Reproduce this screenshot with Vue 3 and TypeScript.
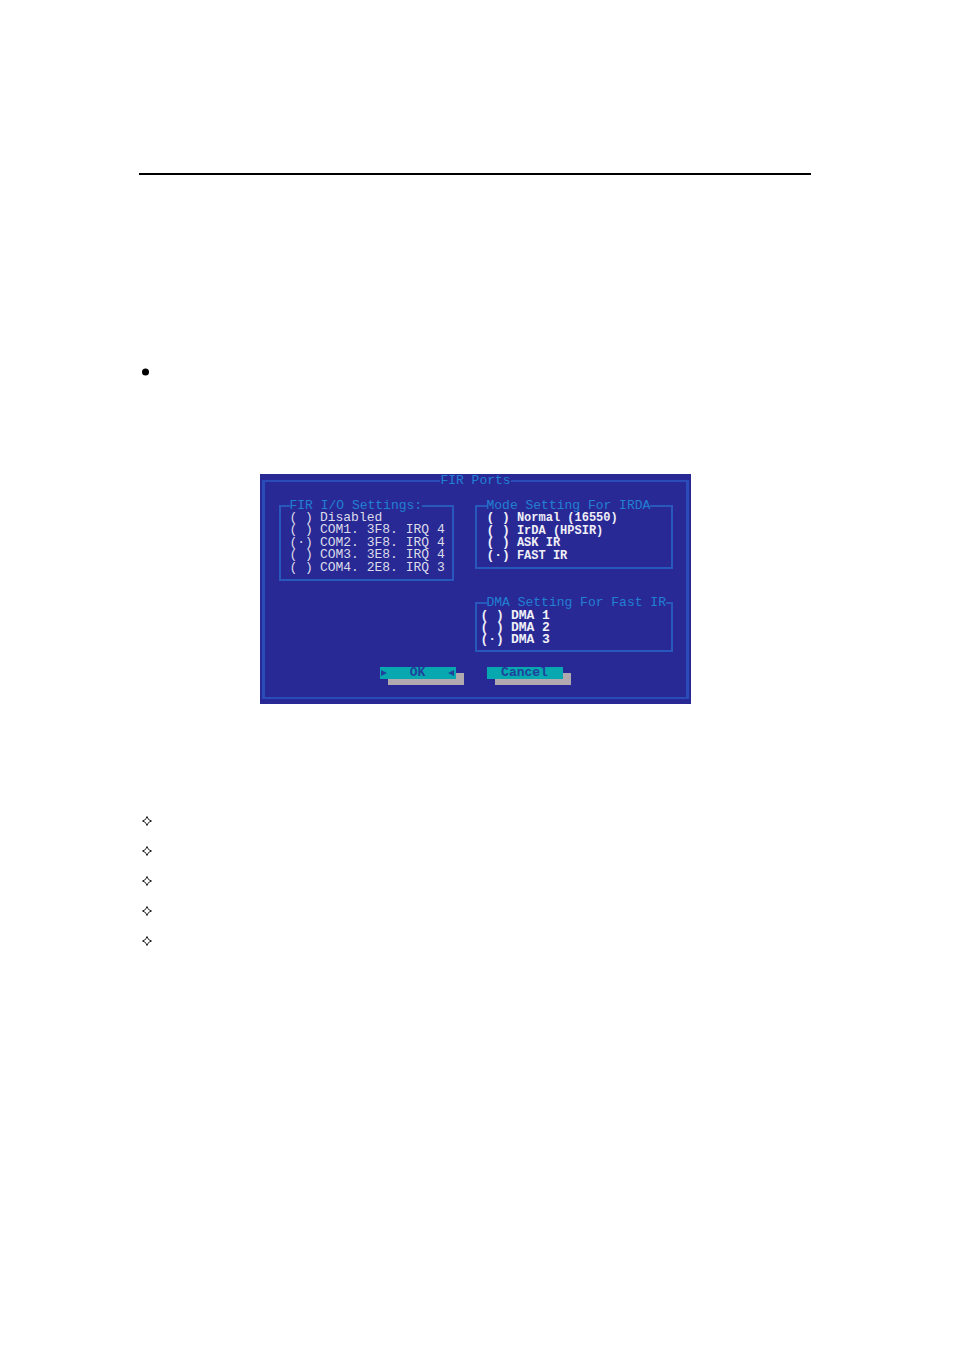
<script setup lang="ts">
import { reactive } from 'vue'

interface Group {
  id: string
  title: string
  options: string[]
}

const ioGroup: Group = {
  id: 'io',
  title: 'FIR I/O Settings:',
  options: ['Disabled', 'COM1. 3F8. IRQ 4', 'COM2. 3F8. IRQ 4', 'COM3. 3E8. IRQ 4', 'COM4. 2E8. IRQ 3'],
}

const modeGroup: Group = {
  id: 'mode',
  title: 'Mode Setting For IRDA',
  options: ['Normal (16550)', 'IrDA (HPSIR)', 'ASK IR', 'FAST IR'],
}

const dmaGroup: Group = {
  id: 'dma',
  title: 'DMA Setting For Fast IR',
  options: ['DMA 1', 'DMA 2', 'DMA 3'],
}

const columns: Group[][] = [[ioGroup], [modeGroup, dmaGroup]]
const selected = reactive<Record<string, number>>({ io: 2, mode: 3, dma: 2 })
</script>

<template>
  <main class="page">
    <hr class="rule" />

    <ul class="bullets">
      <li>
        <svg class="dot" viewBox="0 0 8 8" aria-hidden="true"><circle cx="3.5" cy="4" r="3.5" /></svg>
      </li>
    </ul>

    <form class="dialog" @submit.prevent>
      <fieldset class="frame">
        <legend class="frame-title">FIR Ports</legend>
        <div class="columns">
          <div v-for="(groups, c) in columns" :key="c" class="column">
            <fieldset v-for="group in groups" :key="group.id" class="group" :class="group.id">
              <legend class="group-title">{{ group.title }}</legend>
              <div class="options">
                <label v-for="(option, i) in group.options" :key="option" class="option">
                  <input v-model="selected[group.id]" type="radio" :name="group.id" :value="i" />
                  <span class="mark" aria-hidden="true">{{ selected[group.id] === i ? '(·)' : '( )' }}</span>
                  <span class="name">{{ option }}</span>
                </label>
              </div>
            </fieldset>
          </div>
        </div>
        <div class="actions">
          <button type="submit" class="button">
            <svg class="arrow" viewBox="0 0 8 8" aria-hidden="true"><path d="M1 1L7 4L1 7Z" /></svg>
            <span>OK</span>
            <svg class="arrow" viewBox="0 0 8 8" aria-hidden="true"><path d="M7 1L1 4L7 7Z" /></svg>
          </button>
          <button type="button" class="button plain">Cancel</button>
        </div>
      </fieldset>
    </form>

    <ul class="stars">
      <li v-for="n in 5" :key="n">
        <svg class="star" viewBox="0 0 10 10" aria-hidden="true">
          <path d="M5 0.5L6.5 3.5L9.5 5L6.5 6.5L5 9.5L3.5 6.5L0.5 5L3.5 3.5Z" />
        </svg>
      </li>
    </ul>
  </main>
</template>

<style>
body {
  margin: 0;
  background: #fff;
}
</style>

<style scoped>
.page {
  box-sizing: border-box;
  padding: 173px 143px 0 139px;
  font-family: 'Liberation Mono', 'DejaVu Sans Mono', monospace;
  font-size: 13px;
}

.rule {
  height: 2px;
  margin: 0;
  border: 0;
  background: #000;
}

ul {
  margin: 0;
  padding: 0;
  list-style: none;
}

li {
  display: flex;
  align-items: center;
  height: 30px;
  padding-left: 3px;
}

.bullets {
  margin-top: 182px;
}

.dot {
  width: 8px;
  height: 8px;
}

.dialog {
  box-sizing: border-box;
  max-width: 431px;
  margin: 87px auto 0;
  padding: 0 2px 5px;
  background: #292996;
}

fieldset {
  min-width: 0;
  margin: 0;
}

.frame {
  padding: 12px 13px 18px 14px;
  border: 2px solid #2a4cb8;
  border-width: 2px 3px;
}

legend {
  color: #2180d2;
  white-space: nowrap;
}

.frame-title {
  margin: 0 auto;
  padding: 0;
  line-height: 14px;
}

.columns {
  display: grid;
  grid-template-columns: 175fr 198fr;
  gap: 21px;
  align-items: start;
}

.column {
  display: grid;
  gap: 28px;
  min-width: 0;
}

.group {
  padding: 0 4px 5px 9px;
  border: 2px solid #2858bc;
}

.group-title {
  padding: 0;
  line-height: 12px;
}

.options {
  display: grid;
  grid-auto-rows: 1fr;
  color: #dcdce8;
}

.io .options {
  height: 62px;
}

.mode .options {
  height: 50px;
}

.mode,
.dma {
  padding-left: 10px;
}

.dma {
  padding-top: 1px;
  padding-bottom: 4px;
}

.dma .options {
  margin-left: -6px;
}

.mode .options,
.dma .options {
  color: #f0f0f6;
  font-weight: bold;
}

.mode .name {
  font-size: 12px;
}

.option {
  display: flex;
  gap: 7px;
  line-height: 12px;
  white-space: pre;
}

.option input {
  appearance: none;
  position: absolute;
  width: 23px;
  height: 12px;
  margin: 0;
}

.actions {
  display: flex;
  gap: 31px;
  margin: 15px 0 0 101px;
}

.button {
  display: flex;
  align-items: center;
  justify-content: space-between;
  width: 76px;
  height: 12px;
  padding: 0;
  border: 0;
  background: #08a8b0;
  box-shadow: 8px 6px 0 #b0aab0;
  color: #20409c;
  font: bold 13px/12px 'Liberation Mono', 'DejaVu Sans Mono', monospace;
}

.plain {
  justify-content: center;
}

.arrow {
  width: 8px;
  height: 8px;
  fill: #20409c;
}

.stars {
  margin-top: 102px;
}

.star {
  width: 10px;
  height: 10px;
  fill: none;
  stroke: #222;
}
</style>
